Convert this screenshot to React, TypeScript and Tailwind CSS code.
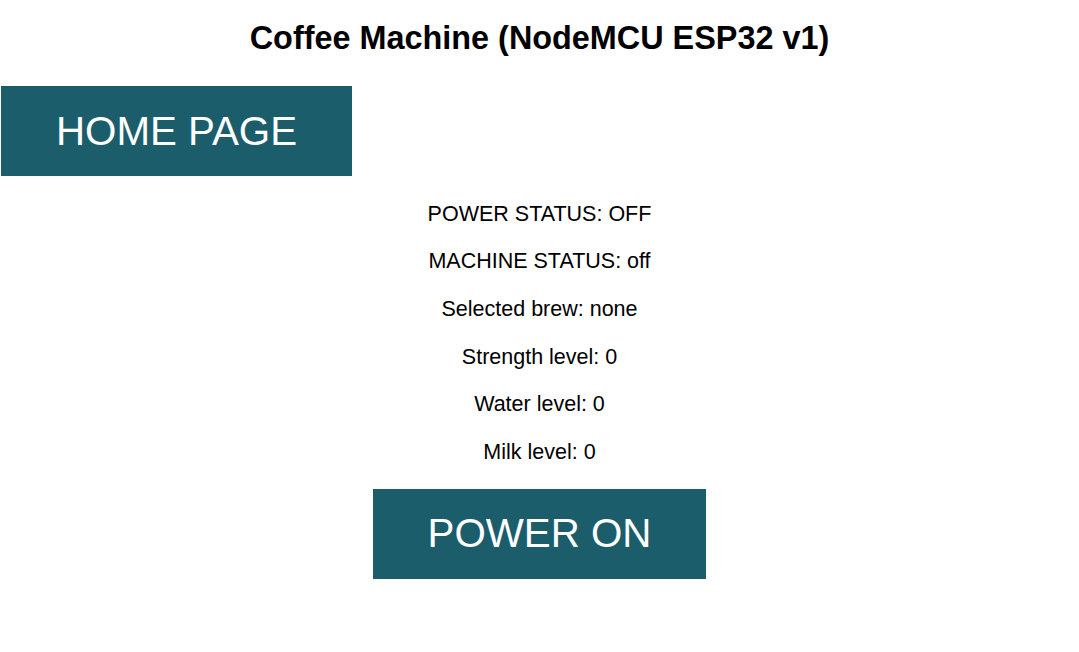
const statusLines = [
  "POWER STATUS: OFF",
  "MACHINE STATUS: off",
  "Selected brew: none",
  "Strength level: 0",
  "Water level: 0",
  "Milk level: 0",
];

function TealButton({ label }: { label: string }) {
  return (
    <button className="bg-[#1b5d6b] text-white text-[40.3px] leading-[47px] px-[55px] py-[21.5px] whitespace-nowrap">
      {label}
    </button>
  );
}

export default function App() {
  return (
    <div
      className="min-h-[652px] w-full bg-white text-black"
      style={{ fontFamily: '"Liberation Sans", Arial, sans-serif' }}
    >
      <h2 className="text-center font-bold text-[32.4px] leading-[37px] pt-[20px]">
        Coffee Machine (NodeMCU ESP32 v1)
      </h2>

      <div className="pl-px mt-[29px]">
        <TealButton label="HOME PAGE" />
      </div>

      <div className="flex flex-col items-center mt-[24.5px] text-[21.5px] leading-[26px] gap-[21.7px]">
        {statusLines.map((line) => (
          <p key={line}>{line}</p>
        ))}
      </div>

      <div className="flex justify-center mt-[24px]">
        <TealButton label="POWER ON" />
      </div>
    </div>
  );
}
